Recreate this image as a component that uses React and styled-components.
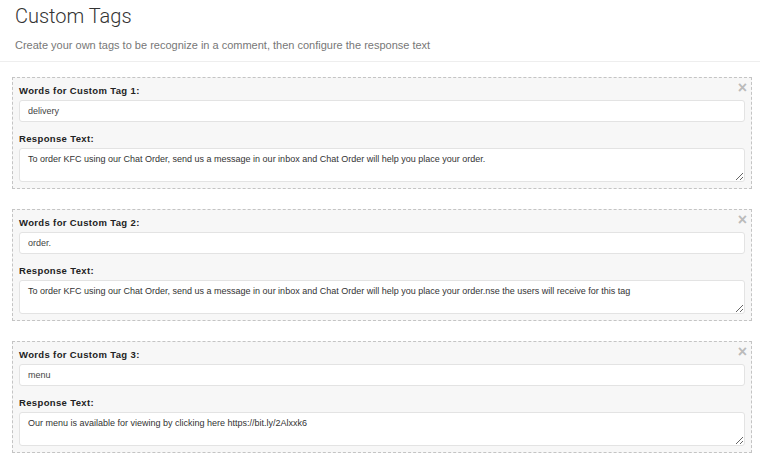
import styled, { createGlobalStyle } from 'styled-components';

const GlobalStyle = createGlobalStyle`
body {
  margin: 0;
  background: #fff;
  font-family: "Liberation Sans", Arial, sans-serif;
}
`;

const tags = [
  {
    words: 'delivery',
    response: 'To order KFC using our Chat Order, send us a message in our inbox and Chat Order will help you place your order.',
  },
  {
    words: 'order.',
    response: 'To order KFC using our Chat Order, send us a message in our inbox and Chat Order will help you place your order.nse the users will receive for this tag',
  },
  {
    words: 'menu',
    response: 'Our menu is available for viewing by clicking here https://bit.ly/2Alxxk6',
  },
];

const Page = styled.div`
width: 760px;
height: 455px;
overflow: hidden;
`;

const Header = styled.div`
padding: 4px 15px 0;
border-bottom: 1px solid #eee;
height: 57px;
`;

const Title = styled.h1`
margin: 0;
font-family: Roboto, "Liberation Sans", sans-serif;
font-weight: 300;
font-size: 20px;
line-height: 24px;
color: #333;
`;

const Subtitle = styled.p`
margin: 11px 0 0;
font-family: "Liberation Sans", Arial, sans-serif;
font-size: 11px;
color: #777;
`;

const List = styled.div`
display: flex;
flex-direction: column;
gap: 20px;
padding: 15px 8px 0 12px;
`;

const Card = styled.div`
position: relative;
background: #f7f7f7;
border: 1px dashed #c4c4c4;
padding: 6px;
display: flex;
flex-direction: column;
`;

const Close = styled.span`
position: absolute;
top: 2px;
right: 4px;
font-size: 16px;
font-weight: bold;
color: #bbb;
line-height: 16px;
cursor: pointer;
`;

const Label = styled.label`
font-size: 9.5px;
font-weight: bold;
letter-spacing: 0.35px;
color: #222;
line-height: 13px;
margin: 0 0 3px;
`;

const Input = styled.input`
height: 22px;
box-sizing: border-box;
border: 1px solid #e3e3e3;
border-radius: 3px;
background: #fff;
padding: 0 8px;
font-family: "Liberation Sans", Arial, sans-serif;
font-size: 9px;
color: #444;
outline: none;
margin-bottom: 10px;
`;

const TextArea = styled.textarea`
height: 34px;
box-sizing: border-box;
border: 1px solid #e3e3e3;
border-radius: 3px;
background: #fff;
padding: 5px 8px;
font-family: "Liberation Sans", Arial, sans-serif;
font-size: 9px;
color: #333;
outline: none;
resize: vertical;
`;

const TagCard = ({ index, tag }) => (
  <Card>
    <Close>×</Close>
    <Label>Words for Custom Tag {index}:</Label>
    <Input defaultValue={tag.words} />
    <Label>Response Text:</Label>
    <TextArea defaultValue={tag.response} />
  </Card>
);

const App = () => (
  <Page>
    <GlobalStyle />
    <Header>
      <Title>Custom Tags</Title>
      <Subtitle>Create your own tags to be recognize in a comment, then configure the response text</Subtitle>
    </Header>
    <List>
      {tags.map((tag, i) => (
        <TagCard key={i} index={i + 1} tag={tag} />
      ))}
    </List>
  </Page>
);

export default App;
